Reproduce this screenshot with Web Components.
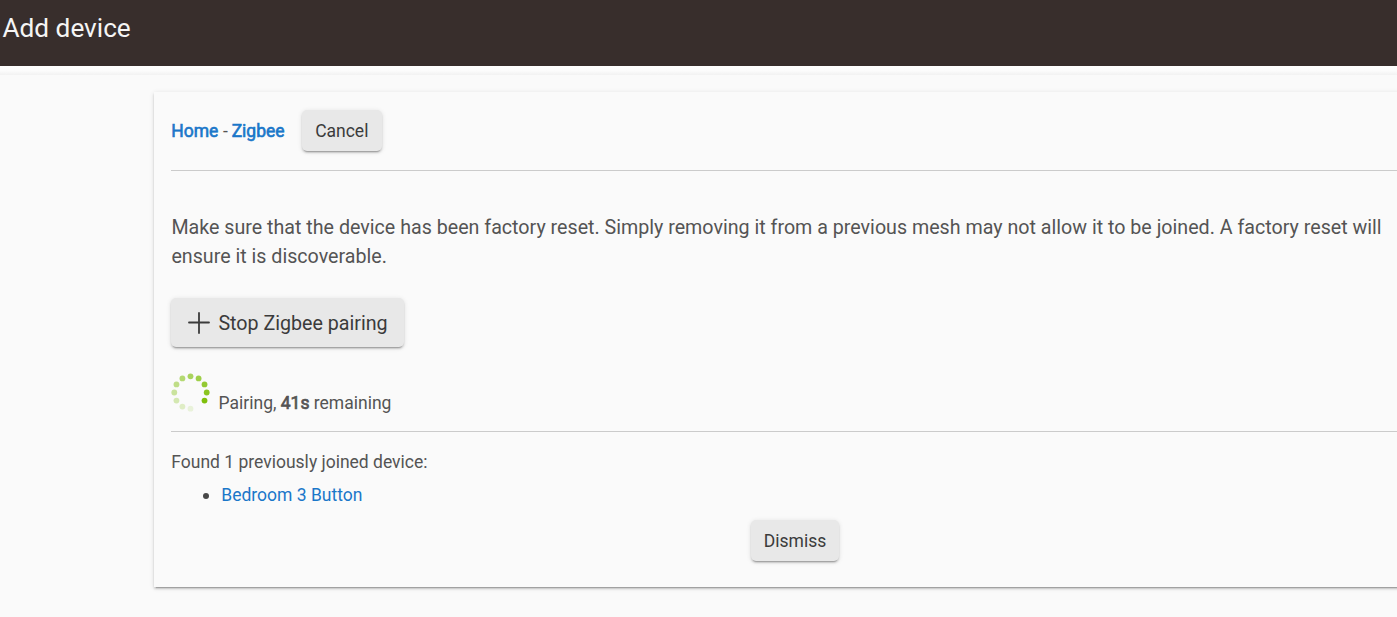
<!DOCTYPE html>
<html lang="en">
<head>
<meta charset="utf-8">
<title>Add device</title>
<style>
    html, body {
        margin: 0;
        height: 100%;
        overflow: hidden;
    }
    body {
        background: #fafafa;
        color: #545454;
        font-family: Roboto, sans-serif;
        font-size: 17.5px;
    }
</style>
</head>
<body>

<template id="page-header">
    <style>
        :host {
            display: block;
            box-sizing: border-box;
            height: 66px;
            padding: 12px 2.5px;
            background: #382e2c;
            color: #f5f5f5;
            font-size: 26.2px;
            line-height: 32px;
        }
        h1 {
            margin: 0;
            font: inherit;
        }
    </style>
    <h1><slot></slot></h1>
</template>

<template id="page-body">
    <style>
        :host {
            display: block;
            height: 551px;
            background: linear-gradient(#fff, #fdfdfd 4px, #f2f2f2 9px, #fafafa 9px);
        }
    </style>
    <slot></slot>
</template>

<template id="device-card">
    <style>
        :host {
            display: block;
            box-sizing: border-box;
            width: 1282px;
            height: 495px;
            margin-left: 154px;
            padding: 18px 17px 0;
            background: #fafafa;
            box-shadow: 0 3px 1px -2px rgba(0,0,0,.2), 0 2px 2px 0 rgba(0,0,0,.14), 0 1px 5px 0 rgba(0,0,0,.12);
        }
    </style>
    <slot></slot>
</template>

<template id="raised-button">
    <style>
        :host {
            display: inline-block;
        }
        button {
            display: flex;
            align-items: center;
            justify-content: center;
            box-sizing: border-box;
            width: var(--button-width);
            height: var(--button-height, 41px);
            margin: 0;
            padding: var(--button-padding, 0);
            border: 0;
            border-radius: 5px;
            background: #e8e8e8;
            color: #3b3b3b;
            font: inherit;
            white-space: nowrap;
            box-shadow: 0 3px 1px -2px rgba(0,0,0,.2), 0 2px 2px 0 rgba(0,0,0,.14), 0 1px 5px 0 rgba(0,0,0,.12);
        }
    </style>
    <button type="button"><slot name="icon"></slot><slot></slot></button>
</template>

<template id="text-link">
    <style>
        a {
            color: #1a77c9;
            text-decoration: none;
        }
        :host([strong]) a {
            -webkit-text-stroke: .6px #1a77c9;
        }
    </style>
    <a href="#"><slot></slot></a>
</template>

<template id="rule-line">
    <style>
        :host {
            display: block;
            height: 1px;
            background: #cbcbcb;
        }
    </style>
</template>

<template id="progress-dots">
    <style>
        :host {
            display: block;
            width: 40px;
            height: 40px;
        }
        svg {
            display: block;
        }
    </style>
    <svg width="40" height="40" viewBox="0 0 40 40" fill="#7fbf0b"></svg>
</template>

<template id="pairing-panel">
    <style>
        :host {
            display: block;
        }
        .crumbs {
            display: flex;
            align-items: center;
            height: 41px;
            line-height: 22px;
        }
        .crumbs text-link {
            padding-left: .3px;
        }
        .crumbs span {
            margin: 0 3.6px 0 4.5px;
        }
        .crumbs raised-button {
            --button-width: 80px;
            margin-left: 17.2px;
        }
        .top {
            margin-top: 19px;
        }
        .note {
            width: 1230px;
            margin: 42px 0 0;
            padding-left: .4px;
            font-size: 19.675px;
            line-height: 29px;
        }
        .pair {
            display: block;
            width: 233px;
            margin: 27px 0 0;
            font-size: 19.67px;
            line-height: 25px;
            --button-width: 233px;
            --button-height: 49px;
            --button-padding: 2px 0 0;
        }
        .pair svg {
            margin: 0 8px 2px 1px;
        }
        .status {
            display: flex;
            height: 40px;
            margin-top: 26px;
        }
        .status span {
            margin: 18px 0 0 7.6px;
            line-height: 24px;
        }
        b {
            font-weight: 400;
            -webkit-text-stroke: .7px #545454;
        }
        .mid {
            margin-top: 18px;
        }
        .found {
            margin: 18px 0 0;
            padding-left: .3px;
            line-height: 24px;
        }
        ul {
            margin: 9px 0 0;
            padding-left: 32px;
            line-height: 24px;
            list-style: none;
        }
        li {
            display: flex;
            align-items: center;
        }
        li::before {
            content: "";
            width: 6px;
            height: 6px;
            margin: 2px 12.3px 0 0;
            border-radius: 50%;
            background: #484848;
        }
        .dismiss {
            display: flex;
            justify-content: center;
            margin-top: 13px;
            --button-width: 88px;
        }
    </style>
    <div class="crumbs"><text-link strong>Home</text-link><span>-</span><text-link strong>Zigbee</text-link><raised-button>Cancel</raised-button></div>
    <rule-line class="top"></rule-line>
    <p class="note">Make sure that the device has been factory reset. Simply removing it from a previous mesh may not allow it to be joined. A factory reset will ensure it is discoverable.</p>
    <raised-button class="pair"><svg slot="icon" width="22" height="22" viewBox="0 0 22 22"><path d="M11 1v20M1 10.5h20" fill="none" stroke="#3b3b3b" stroke-width="1.8" stroke-linecap="round"/></svg>Stop Zigbee pairing</raised-button>
    <div class="status"><progress-dots></progress-dots><span>Pairing, <b id="seconds"></b> remaining</span></div>
    <rule-line class="mid"></rule-line>
    <p class="found"></p>
    <ul></ul>
    <div class="dismiss"><raised-button>Dismiss</raised-button></div>
</template>

<page-header>Add device</page-header>
<page-body>
    <div style="height: 26px"></div>
    <device-card>
        <pairing-panel data-seconds="41" data-devices='["Bedroom 3 Button"]'></pairing-panel>
    </device-card>
</page-body>

<script type="text/javascript">
    class TemplateElement extends HTMLElement {
        constructor() {
            super();
            var shadow = this.attachShadow({mode: 'open'});
            shadow.appendChild(document.getElementById(this.localName).content.cloneNode(true));
        }
    }

    class ProgressDotsElement extends TemplateElement {
        connectedCallback() {
            // Twelve places on the ring, the one after the head stays empty
            let svg = this.shadowRoot.querySelector('svg');
            let dots = '';
            for (let i = 0; i < 11; i++) {
                let angle = (30 - i * 30) * Math.PI / 180;
                let x = 19.5 + 16.2 * Math.cos(angle);
                let y = 19.5 + 16.2 * Math.sin(angle);
                dots += `<circle cx="${x.toFixed(2)}" cy="${y.toFixed(2)}" r="2.9" opacity="${(1 - i * 0.087).toFixed(2)}"/>`;
            }
            svg.innerHTML = dots;
        }
    }

    class PairingPanelElement extends TemplateElement {
        connectedCallback() {
            let root = this.shadowRoot;
            let devices = JSON.parse(this.getAttribute('data-devices'));

            // Set countdown
            root.getElementById('seconds').innerText = `${this.getAttribute('data-seconds')}s`;

            // Set joined devices
            root.querySelector('.found').innerText = `Found ${devices.length} previously joined device${devices.length == 1 ? '' : 's'}:`;
            root.querySelector('ul').innerHTML = devices.map(name => `<li><text-link>${name}</text-link></li>`).join('');
        }
    }

    for (let name of ['page-header', 'page-body', 'device-card', 'raised-button', 'text-link', 'rule-line']) {
        customElements.define(name, class extends TemplateElement {});
    }
    customElements.define('progress-dots', ProgressDotsElement);
    customElements.define('pairing-panel', PairingPanelElement);
</script>
</body>
</html>
